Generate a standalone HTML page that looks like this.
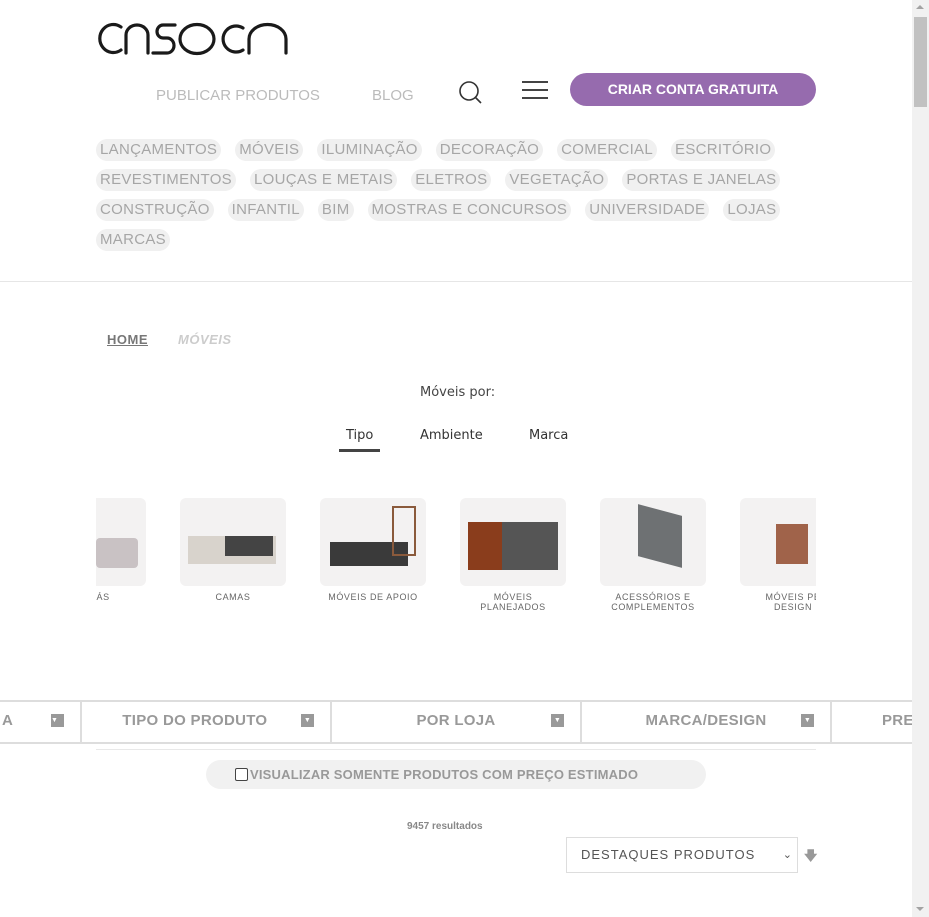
<!DOCTYPE html>
<html><head><meta charset="utf-8"><style>
*{box-sizing:border-box;margin:0;padding:0}
body{width:929px;height:917px;overflow:hidden;background:#fff;font-family:"Liberation Sans",Arial,sans-serif;position:relative}
.abs{position:absolute}
.nav{color:#bbb;font-size:15px}
.tags{position:absolute;left:96px;top:139px;width:720px}
.tags span{display:inline-block;background:#f0f0f0;color:#a6a6a6;font-size:15px;letter-spacing:.3px;height:22px;line-height:22px;padding:0 4px;border-radius:11px;margin:0 14px 8px 0}
.cat{position:absolute;top:498px;width:106px;text-align:center}
.cat .img{height:88px;background:#f3f2f2;border-radius:6px}
.cat .t{font-size:9px;letter-spacing:.6px;color:#666;margin-top:6px;line-height:10px}
.cell{position:absolute;top:700px;height:44px;width:250px;border-left:2px solid #ddd;font-weight:bold;color:#999;font-size:15px;letter-spacing:.3px;line-height:42px;text-align:center}
.cell i{position:absolute;right:16px;top:14px;width:13px;height:13px;background:#999;color:#fff;font-size:7px;line-height:13px;font-style:normal}
</style></head><body>
<svg class="abs" style="left:96px;top:22px" width="194" height="34" viewBox="0 0 194 34" fill="none" stroke="#1a1a1a" stroke-width="3.2" stroke-linecap="round">
<path d="M25 5 A13.5 14 0 1 0 25 28"/>
<path d="M30 31 V13 A11 10 0 0 1 52 13 V31"/>
<path d="M79 3 H67 A6 6.5 0 0 0 67 16 H71 A7 7.5 0 0 1 71 31 H57"/>
<ellipse cx="101" cy="17" rx="17" ry="14.5"/>
<path d="M147 6 A13 13 0 1 0 147 28"/>
<path d="M153 31 V17 A18.5 14.5 0 0 1 190 17 V31"/>
</svg>
<div class="abs nav" style="left:156px;top:87px">PUBLICAR PRODUTOS</div>
<div class="abs nav" style="left:372px;top:87px">BLOG</div>
<svg class="abs" style="left:458px;top:80px" width="26" height="24"><circle cx="11" cy="11" r="9" fill="none" stroke="#333" stroke-width="1.6"/><path d="M17.5 17.5 L23 23" stroke="#333" stroke-width="1.6"/></svg>
<div class="abs" style="left:522px;top:81px;width:26px;height:2px;background:#444"></div>
<div class="abs" style="left:522px;top:89px;width:26px;height:2px;background:#444"></div>
<div class="abs" style="left:522px;top:97px;width:26px;height:2px;background:#444"></div>
<div class="abs" style="left:570px;top:73px;width:246px;height:33px;border-radius:17px;background:#966bae;color:#fff;font-weight:bold;font-size:14px;text-align:center;line-height:33px">CRIAR CONTA GRATUITA</div>
<div class="tags">
<span>LANÇAMENTOS</span><span>MÓVEIS</span><span>ILUMINAÇÃO</span><span>DECORAÇÃO</span><span>COMERCIAL</span><span>ESCRITÓRIO</span><span>REVESTIMENTOS</span><span>LOUÇAS E METAIS</span><span>ELETROS</span><span>VEGETAÇÃO</span><span>PORTAS E JANELAS</span><span>CONSTRUÇÃO</span><span>INFANTIL</span><span>BIM</span><span>MOSTRAS E CONCURSOS</span><span>UNIVERSIDADE</span><span>LOJAS</span><span>MARCAS</span>
</div>
<div class="abs" style="left:0;top:281px;width:912px;height:1px;background:#e6e6e6"></div>
<div class="abs" style="left:107px;top:332px;font-size:13px;font-weight:bold;color:#777;text-decoration:underline;letter-spacing:.5px">HOME</div>
<div class="abs" style="left:178px;top:332px;font-size:13px;font-weight:bold;font-style:italic;color:#ccc;letter-spacing:.5px">MÓVEIS</div>
<div class="abs" style="left:420px;top:385px;color:#444;font-family:'DejaVu Sans',sans-serif;font-size:13px">Móveis por:</div>
<div class="abs" style="left:346px;top:428px;font-size:13px;color:#333;font-family:'DejaVu Sans',sans-serif">Tipo</div>
<div class="abs" style="left:339px;top:449px;width:41px;height:3px;background:#444"></div>
<div class="abs" style="left:420px;top:428px;font-size:13px;color:#333;font-family:'DejaVu Sans',sans-serif">Ambiente</div>
<div class="abs" style="left:529px;top:428px;font-size:13px;color:#333;font-family:'DejaVu Sans',sans-serif">Marca</div>
<div class="abs" style="left:96px;top:498px;width:720px;height:120px;overflow:hidden">
<div class="cat" style="left:-56px;top:0"><div class="img" style="position:relative"><div style="position:absolute;left:56px;top:40px;width:42px;height:30px;background:#c9c2c4;border-radius:4px"></div></div><div class="t">SOFÁS</div></div>
<div class="cat" style="left:84px;top:0"><div class="img" style="position:relative"><div style="position:absolute;left:8px;top:38px;width:88px;height:28px;background:#d8d3cc"></div><div style="position:absolute;left:45px;top:38px;width:48px;height:20px;background:#444"></div></div><div class="t">CAMAS</div></div>
<div class="cat" style="left:224px;top:0"><div class="img" style="position:relative"><div style="position:absolute;left:10px;top:44px;width:78px;height:24px;background:#3a3a3a"></div><div style="position:absolute;left:72px;top:8px;width:24px;height:50px;border:2px solid #8a5a3c"></div></div><div class="t">MÓVEIS DE APOIO</div></div>
<div class="cat" style="left:364px;top:0"><div class="img" style="position:relative"><div style="position:absolute;left:8px;top:24px;width:90px;height:48px;background:#555"></div><div style="position:absolute;left:8px;top:24px;width:34px;height:48px;background:#8a3d1c"></div></div><div class="t">MÓVEIS<br>PLANEJADOS</div></div>
<div class="cat" style="left:504px;top:0"><div class="img" style="position:relative"><div style="position:absolute;left:38px;top:12px;width:44px;height:52px;background:#6e7173;transform:skewY(15deg)"></div></div><div class="t">ACESSÓRIOS E<br>COMPLEMENTOS</div></div>
<div class="cat" style="left:644px;top:0"><div class="img" style="position:relative"><div style="position:absolute;left:36px;top:26px;width:32px;height:40px;background:#a0634a"></div></div><div class="t">MÓVEIS PE<br>DESIGN</div></div>
</div>
<div class="abs" style="left:0;top:700px;width:912px;height:2px;background:#ddd"></div>
<div class="abs" style="left:0;top:742px;width:912px;height:2px;background:#ddd"></div>
<div class="cell" style="left:-170px;text-align:left;padding-left:170px">A<i>▼</i></div>
<div class="cell" style="left:80px">TIPO DO PRODUTO &nbsp;&nbsp;&nbsp;&nbsp;<i>▼</i></div>
<div class="cell" style="left:330px">POR LOJA<i>▼</i></div>
<div class="cell" style="left:580px">MARCA/DESIGN<i>▼</i></div>
<div class="cell" style="left:830px;text-align:left;padding-left:50px">PRE</div>
<div class="abs" style="left:96px;top:749px;width:720px;height:1px;background:#e8e8e8"></div>
<div class="abs" style="left:206px;top:760px;width:500px;height:29px;border-radius:15px;background:#f1f1f1;font-size:13px;font-weight:bold;color:#999;line-height:29px;padding-left:29px;letter-spacing:.2px">
<span style="position:absolute;left:29px;top:8px;width:13px;height:13px;border:1px solid #444;border-radius:2px;background:#fff"></span><span style="margin-left:15px">VISUALIZAR SOMENTE PRODUTOS COM PREÇO ESTIMADO</span></div>
<div class="abs" style="left:407px;top:821px;font-size:10px;font-weight:bold;color:#888">9457 resultados</div>
<div class="abs" style="left:566px;top:837px;width:232px;height:36px;border:1px solid #ddd;font-size:13px;letter-spacing:1px;color:#555;line-height:34px;padding-left:14px">DESTAQUES PRODUTOS<span style="position:absolute;right:4px;top:0;font-size:11px">&#8964;</span></div>
<div class="abs" style="left:804px;top:847px;color:#999;font-size:13px;font-weight:bold">&#129095;</div>
<div class="abs" style="left:912px;top:0;width:17px;height:917px;background:#f1f1f1"></div>
<div class="abs" style="left:914px;top:17px;width:13px;height:90px;background:#c1c1c1"></div>
<div class="abs" style="left:916px;top:5px;width:0;height:0;border:4px solid transparent;border-bottom-color:#a3a3a3;border-top:0"></div>
<div class="abs" style="left:916px;top:907px;width:0;height:0;border:4px solid transparent;border-top-color:#a3a3a3;border-bottom:0"></div>
</body></html>
